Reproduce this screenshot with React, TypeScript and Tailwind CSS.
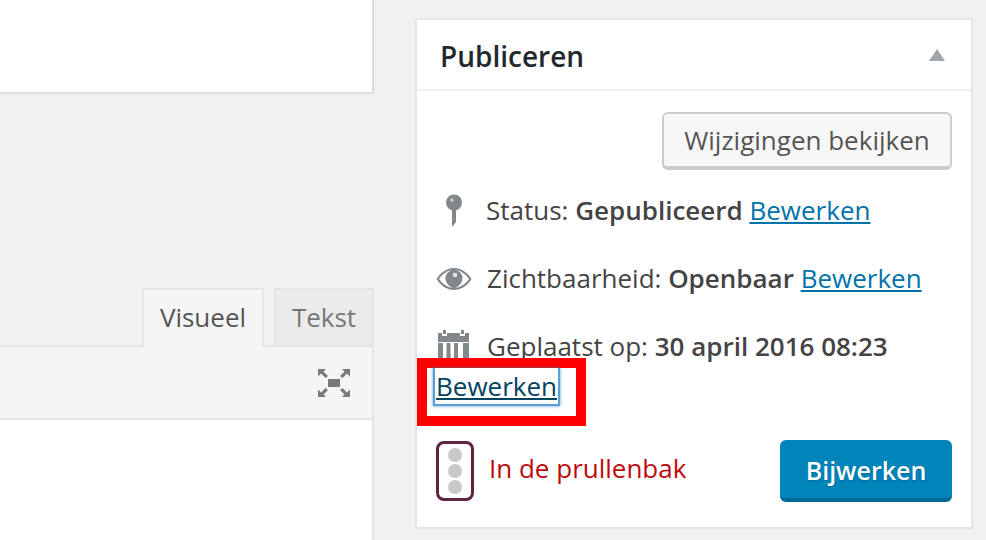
function PinIcon() {
    return (
        <svg width="20" height="34" viewBox="0 0 20 34" className="text-[#82878c]" fill="currentColor">
            <circle cx="10" cy="8.500" r="8" />
            <circle cx="8" cy="6" r="1.800" fill="#c9cbcd" />
            <path d="M8 14h4v14L8 33z" />
        </svg>
    );
}

function EyeIcon() {
    return (
        <svg width="36" height="24" viewBox="0 0 36 24">
            <path d="M0.500 12C5 5 11 1 18 1s13 4 17.500 11C31 19 25 23 18 23S5 19 0.500 12z" fill="#82878c" />
            <path d="M3 12C7 6.500 12 3.500 16 3 11 5 9 8.500 9.500 12c.5 4 3 7 7 8.800C12 20.500 7 17.500 3 12zM33 12C29 6.500 24 3.500 20 3c5 2 7 5.500 6.500 9-.5 4-3 7-7 8.800 4.500-.3 9.500-3.300 13.500-8.800z" fill="#fff" />
            <circle cx="19" cy="8" r="2.300" fill="#e2e3e4" />
        </svg>
    );
}

function CalendarIcon() {
    return (
        <svg width="33" height="36" viewBox="0 0 33 36" fill="#82878c">
            <path d="M1 5h4v3h5V5h13v3h5V5h4v9H1z" />
            <path d="M6 6V3a1.500 1.500 0 0 1 3 0v3zM24 6V3a1.500 1.500 0 0 1 3 0v3z" />
            <rect x="1" y="15" width="5" height="21" />
            <rect x="9.500" y="15" width="4" height="21" />
            <rect x="17" y="15" width="4" height="21" />
            <rect x="26" y="15" width="6" height="21" />
        </svg>
    );
}

function TrafficLight() {
    return (
        <div className="flex flex-col items-center justify-center gap-[2px] w-[38px] h-[60px] border-[3px] border-[#5f2442] rounded-[8px] bg-white self-start">
            <span className="w-[14px] h-[14px] rounded-full bg-[#c8c8c8]" />
            <span className="w-[14px] h-[14px] rounded-full bg-[#c8c8c8]" />
            <span className="w-[14px] h-[14px] rounded-full bg-[#c8c8c8]" />
        </div>
    );
}

function FullscreenIcon() {
    return (
        <svg width="32" height="28" viewBox="0 0 32 28" fill="#7a7a7a">
            <rect x="10" y="10" width="12" height="8" />
            <path d="M0 0h8L5.500 2.500 10 7 7.500 9 3 4.500 0 7.500zM32 0h-8l2.500 2.500L22 7l2.500 2 4.500-4.500 3 3zM0 28h8l-2.500-2.500L10 21l-2.500-2L3 23.500l-3-3zM32 28h-8l2.500-2.500L22 21l2.500-2 4.500 4.500 3-3z" />
        </svg>
    );
}

function App() {
    return (
        <div className="flex h-[540px] w-[986px] overflow-hidden bg-[#f1f1f1] font-['Open_Sans',sans-serif] text-[#444]">

            {/* LEFT COLUMN */}
            <div className="flex flex-col w-[374px] shrink-0">
                <div className="h-[94px] bg-white border-r-2 border-b-2 border-[#dedede]" />

                <div className="flex justify-end gap-[10px] mt-[194px] h-[57px] text-[26px]">
                    <div className="relative z-10 flex items-center justify-center w-[122px] h-[59px] bg-[#f5f5f5] border-2 border-b-0 border-[#e5e5e5] text-[#555]">
                        <span className="-mt-[2px]">Visueel</span>
                    </div>
                    <div className="flex items-center justify-center w-[100px] h-[57px] bg-[#ebebeb] border-2 border-b-0 border-[#e5e5e5] text-[#777]">
                        Tekst
                    </div>
                </div>

                <div className="flex items-center justify-end h-[75px] pr-[22px] bg-[#f5f5f5] border-t-2 border-r-2 border-b-2 border-[#e5e5e5]">
                    <FullscreenIcon />
                </div>
                <div className="flex-1 bg-white border-r-2 border-[#e5e5e5]" />
            </div>

            {/* PUBLISH CARD */}
            <div className="relative w-[558px] h-[511px] shrink-0 mt-[18px] ml-[41px] bg-white border-2 border-[#e5e5e5]">
                <div className="flex items-center justify-between h-[71px] pl-[23px] pr-[26px] border-b-2 border-[#eeeeee]">
                    <h2 className="pt-[2px] text-[28px] font-semibold text-[#23282d]">Publiceren</h2>
                    <span className="w-0 h-0 border-x-[8px] border-x-transparent border-b-[12px] border-b-[#a0a5aa]" />
                </div>

                <div className="flex justify-end mt-[21px] pr-[19px]">
                    <button className="w-[290px] h-[58px] rounded-[6px] bg-[#f7f7f7] border-2 border-b-[4px] border-[#cccccc] text-[26px] text-[#555]">
                        Wijzigingen bekijken
                    </button>
                </div>

                <div className="flex items-center h-[34px] mt-[24px] pl-[27px] text-[26px] whitespace-nowrap">
                    <PinIcon />
                    <span className="ml-[22px] -mt-[2px]">Status: <b className="font-semibold">Gepubliceerd</b> <a className="text-[#0073aa] underline">Bewerken</a></span>
                </div>

                <div className="flex items-center h-[34px] mt-[34px] pl-[19px] text-[26px] whitespace-nowrap">
                    <EyeIcon />
                    <span className="ml-[15px] -mt-[2px]">Zichtbaarheid: <b className="font-semibold">Openbaar</b> <a className="text-[#0073aa] underline">Bewerken</a></span>
                </div>

                <div className="flex items-center h-[36px] mt-[32px] pl-[20px] text-[26px] whitespace-nowrap">
                    <CalendarIcon />
                    <span className="ml-[17px]">Geplaatst op: <b className="font-semibold">30 april 2016 08:23</b></span>
                </div>

                <div className="flex items-center justify-between mt-[76px] pl-[19px] pr-[19px]">
                    <div className="flex items-center gap-[15px]">
                        <TrafficLight />
                        <a className="-mt-[6px] text-[26px] text-[#bc0b0b]">In de prullenbak</a>
                    </div>
                    <button className="w-[172px] h-[62px] pt-[3px] rounded-[6px] bg-[#0085ba] border-b-[4px] border-[#006799] text-[25px] font-semibold text-white [text-shadow:0_1px_2px_#006799]">
                        Bijwerken
                    </button>
                </div>

                {/* red marker over the focused link */}
                <div className="absolute left-[0px] top-[338px] flex items-start w-[169px] h-[68px] border-[10px] border-[#ff0000]">
                    <a className="ml-[6px] px-[1px] h-[38px] leading-[36px] text-[26px] text-[#00435f] underline border-x-2 border-b-2 border-[#5b9dd9] shadow-[0_0_3px_rgba(30,140,190,.8)] whitespace-nowrap">
                        Bewerken
                    </a>
                </div>
            </div>

        </div>
    );
}

export default App;
